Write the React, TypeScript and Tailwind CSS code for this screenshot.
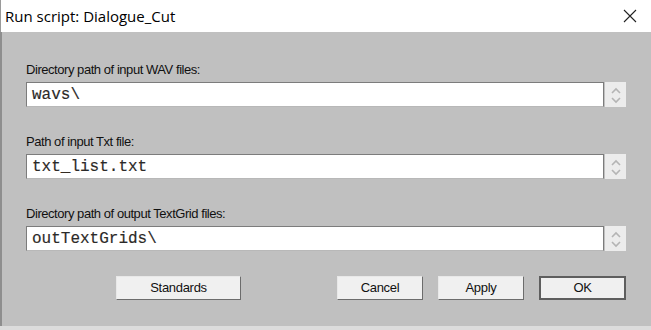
import React from 'react'

function Spinner() {
  return (
    <div className="w-[21px] h-[25px] bg-[#ececec] flex flex-col items-center justify-center">
      <svg width="12" height="20" viewBox="0 0 12 20" fill="none" stroke="#b4b4b4" strokeWidth="1.6">
        <path d="M2 8 L6 4 L10 8" />
        <path d="M2 13 L6 17 L10 13" />
      </svg>
    </div>
  )
}

function Field({ label, value }: { label: string; value: string }) {
  return (
    <div className="flex flex-col">
      <div className="h-[16px] leading-[16px] text-[13px] text-[#111] tracking-[-0.45px]">{label}</div>
      <div className="flex items-start gap-[1px] mt-[4px]">
        <div className="w-[578px] h-[25px] bg-white border border-[#7c7c7c] border-b-[#b8b8b8] flex items-center pl-[5px]">
          <span
            className="text-[16px] font-normal text-[#2a2a2a] leading-none [-webkit-text-stroke:0.15px_#3a2a1a]"
            style={{ fontFamily: '"Liberation Mono", "Courier New", monospace' }}
          >
            {value}
          </span>
        </div>
        <Spinner />
      </div>
    </div>
  )
}

function Btn({ children, w, isDefault }: { children: React.ReactNode; w: string; isDefault?: boolean }) {
  const border = isDefault
    ? 'border-2 border-[#5e5e5e]'
    : 'border border-t-[#e8e8e8] border-l-[#e8e8e8] border-r-[#6c6c6c] border-b-[#6c6c6c]'
  return (
    <button className={`${w} h-[24px] bg-[#f0f0f0] ${border} text-[13px] text-[#111] tracking-[-0.3px] flex items-center justify-center`}>
      {children}
    </button>
  )
}

export default function App() {
  return (
    <div
      className="w-[651px] h-[330px] flex flex-col overflow-hidden"
      style={{ fontFamily: '"Liberation Sans", Arial, sans-serif' }}
    >
      {/* title bar */}
      <div className="h-[32px] bg-white flex items-center justify-between border-l border-[#9a9a9a]">
        <span className="pl-[4px] text-[15px] text-black" style={{ fontFamily: '"Open Sans", "Noto Sans", sans-serif' }}>
          Run script: Dialogue_Cut
        </span>
        <svg className="mr-[14px]" width="14" height="14" viewBox="0 0 14 14" stroke="#222" strokeWidth="1.1">
          <path d="M1 1 L13 13 M13 1 L1 13" />
        </svg>
      </div>

      {/* body */}
      <div className="flex-1 bg-[#c0c0c0] border-l-2 border-[#8e8e8e] pl-[24px] pt-[30px] flex flex-col">
        <Field label="Directory path of input WAV files:" value="wavs\" />
        <div className="mt-[27px]">
          <Field label="Path of input Txt file:" value="txt_list.txt" />
        </div>
        <div className="mt-[27px]">
          <Field label="Directory path of output TextGrid files:" value="outTextGrids\" />
        </div>

        <div className="flex w-[600px] mt-[25px]">
          <div className="ml-[90px]">
            <Btn w="w-[125px]">Standards</Btn>
          </div>
          <div className="ml-auto flex gap-[15px]">
            <Btn w="w-[86px]">Cancel</Btn>
            <Btn w="w-[86px]">Apply</Btn>
            <Btn w="w-[87px]" isDefault>OK</Btn>
          </div>
        </div>
      </div>
      <div className="h-[4px] bg-[#dcdcdc]" />
    </div>
  )
}
